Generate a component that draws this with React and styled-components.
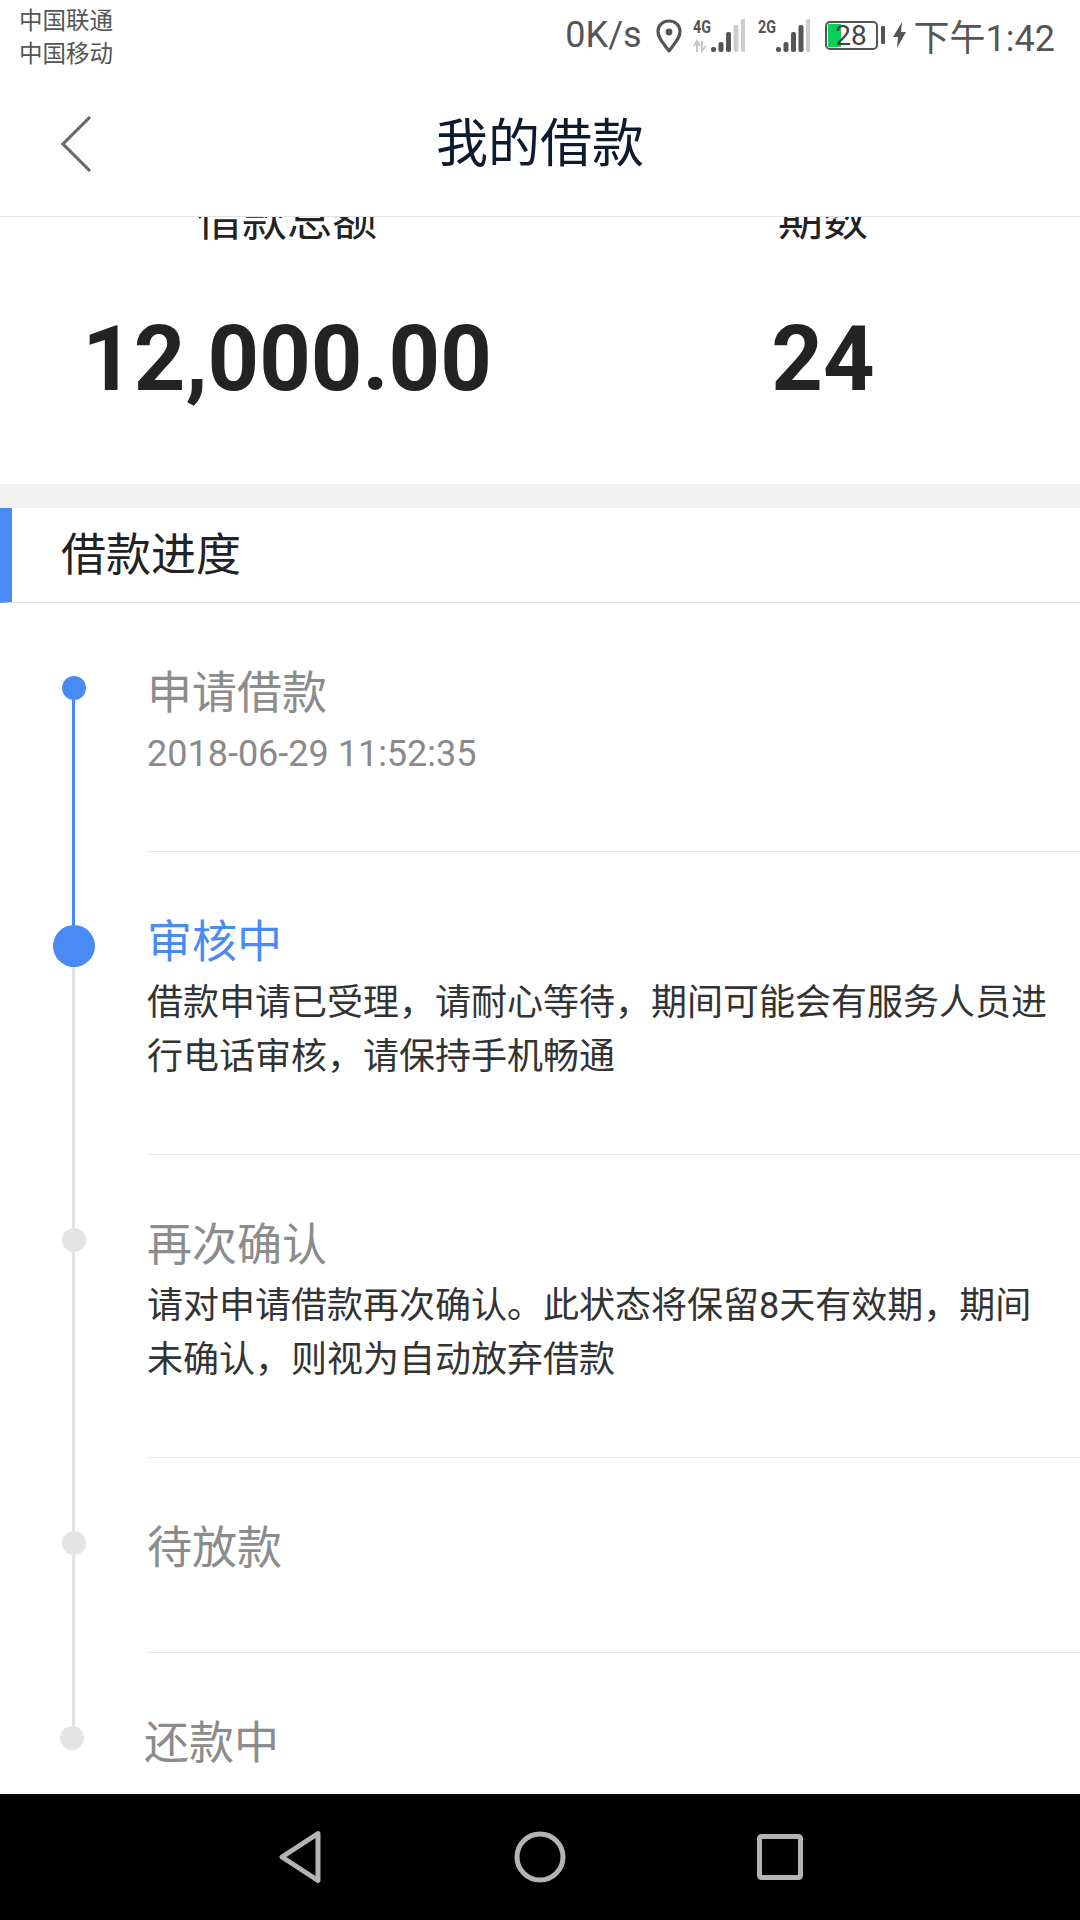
import React from "react";
import styled, { createGlobalStyle } from "styled-components";

const STEPS = [
  { title: "申请借款", date: "2018-06-29 11:52:35", state: "done" },
  {
    title: "审核中",
    body: ["借款申请已受理，请耐心等待，期间可能会有服务人员进", "行电话审核，请保持手机畅通"],
    state: "active",
  },
  {
    title: "再次确认",
    body: ["请对申请借款再次确认。此状态将保留8天有效期，期间", "未确认，则视为自动放弃借款"],
    state: "todo",
  },
  { title: "待放款", state: "todo" },
  { title: "还款中", state: "todo", last: true },
];

export default function App() {
  return (
    <>
      <GlobalStyle />
      <Screen>
        <StatusBar>
          <Carriers>
            <span>中国联通</span>
            <span>中国移动</span>
          </Carriers>
          <StatusRight>
            <Speed>0K/s</Speed>
            <IconSlot $gap={11} $top={2}>
              <PinIcon />
            </IconSlot>
            <IconSlot $gap={13} $top={-2}>
              <SignalIcon label="4G" arrows lit={3} />
            </IconSlot>
            <IconSlot $gap={15} $top={-2}>
              <SignalIcon label="2G" lit={4} />
            </IconSlot>
            <BatteryGroup>
              <Battery>28</Battery>
              <BatteryTip />
              <BoltIcon />
            </BatteryGroup>
            <Clock>下午1:42</Clock>
          </StatusRight>
        </StatusBar>

        <Header>
          <BackButton>
            <svg width="40" height="60" viewBox="0 0 40 60">
              <path d="M34 3 L7 30 L34 57" fill="none" stroke="#666" strokeWidth="3" />
            </svg>
          </BackButton>
          <HeaderTitle>我的借款</HeaderTitle>
        </Header>

        <Summary>
          <SummaryCol>
            <SummaryLabel>借款总额</SummaryLabel>
            <SummaryValue>12,000.00</SummaryValue>
          </SummaryCol>
          <SummaryCol>
            <SummaryLabel>期数</SummaryLabel>
            <SummaryValue>24</SummaryValue>
          </SummaryCol>
        </Summary>

        <Band />

        <SectionHead>
          <SectionTitle>借款进度</SectionTitle>
        </SectionHead>

        <Timeline>
          {STEPS.map((step, i) => (
            <Step key={step.title}>
              <Rail>
                <Segment $hidden={i === 0} $fixed $blue={step.state !== "todo"} />
                <Dot $state={step.state} $shift={step.last} />
                {!step.last && <Segment $blue={step.state === "done"} />}
              </Rail>
              <StepContent $shift={step.last} $last={step.last}>
                <StepTitle $state={step.state}>{step.title}</StepTitle>
                {step.date && <StepDate>{step.date}</StepDate>}
                {step.body && step.body.map((line) => <StepBody key={line}>{line}</StepBody>)}
              </StepContent>
            </Step>
          ))}
        </Timeline>

        <NavBar>
          <NavSlot>
            <svg width="44" height="54" viewBox="0 0 44 54">
              <path d="M40 3.5 L4 27 L40 50.5 Z" fill="none" stroke="#b4b4b4" strokeWidth="5" strokeLinejoin="round" />
            </svg>
          </NavSlot>
          <NavSlot>
            <svg width="52" height="52" viewBox="0 0 52 52">
              <circle cx="26" cy="26" r="23" fill="none" stroke="#b4b4b4" strokeWidth="5" />
            </svg>
          </NavSlot>
          <NavSlot>
            <svg width="46" height="46" viewBox="0 0 46 46">
              <rect x="2.5" y="2.5" width="41" height="41" rx="2" fill="none" stroke="#b4b4b4" strokeWidth="5" />
            </svg>
          </NavSlot>
        </NavBar>
      </Screen>
    </>
  );
}

const PinIcon = () => (
  <svg width="26" height="34" viewBox="0 0 26 34">
    <path
      d="M13 32 C7 24 2 19 2 12.5 C2 6 7 2 13 2 C19 2 24 6 24 12.5 C24 19 19 24 13 32 Z"
      fill="none"
      stroke="#555"
      strokeWidth="3.2"
      strokeLinejoin="round"
    />
    <circle cx="13" cy="13" r="3.4" fill="#555" />
  </svg>
);

const SignalIcon = ({ label, arrows, lit }) => {
  const bars = [5, 10, 20, 27, 33];
  return (
    <svg width="52" height="38" viewBox="0 -4 52 38">
      <text x="0" y="14" fontFamily="Roboto, sans-serif" fontSize="19" fontWeight="700" fill="#555" textLength="18" lengthAdjust="spacingAndGlyphs">
        {label}
      </text>
      {arrows && <path d="M1 27 L4 22 L7 27 M4 23 V33 M9 22 V32 L13 27" fill="none" stroke="#c8c8c8" strokeWidth="2" />}
      {bars.map((h, i) => (
        <rect key={i} x={18 + i * 7.5} y={33 - h} width="5" height={h} rx="2" fill={i < lit ? "#555" : "#cccccc"} />
      ))}
    </svg>
  );
};

const BoltIcon = () => (
  <svg width="13" height="26" viewBox="0 0 13 26">
    <path d="M9 0 L0 15 H5 L4 26 L13 10 H8 Z" fill="#555" />
  </svg>
);

const GlobalStyle = createGlobalStyle`
  html, body {
    margin: 0;
    padding: 0;
    background: #fff;
  }
  * {
    box-sizing: border-box;
  }
  #root {
    font-family: Roboto, "Noto Sans CJK SC", sans-serif;
  }
`;

const Screen = styled.div`
  width: 1080px;
  height: 1920px;
  display: flex;
  flex-direction: column;
  overflow: hidden;
  background: #fff;
`;

const StatusBar = styled.div`
  height: 72px;
  flex: none;
  display: flex;
  justify-content: space-between;
  align-items: flex-start;
  padding: 5px 25px 0 19px;
  color: #555;
`;

const Carriers = styled.div`
  display: flex;
  flex-direction: column;
  font-size: 23.5px;
  line-height: 33px;
`;

const StatusRight = styled.div`
  display: flex;
  align-items: center;
  height: 60px;
`;

const Speed = styled.span`
  font-size: 36px;
  margin-right: 14px;
`;

const IconSlot = styled.div`
  display: flex;
  flex: none;
  margin: ${(p) => p.$top}px ${(p) => p.$gap}px 0 0;
`;

const BatteryGroup = styled.div`
  display: flex;
  align-items: center;
  flex: none;
  margin-right: 8px;
`;

const Battery = styled.div`
  width: 53px;
  height: 29px;
  border: 2px solid #555;
  border-radius: 5px;
  font-size: 28px;
  line-height: 25px;
  text-align: center;
  color: #444;
  background: linear-gradient(#0ad05a, #0ad05a) 1px 1px / 13px 23px no-repeat;
`;

const BatteryTip = styled.div`
  width: 4px;
  height: 18px;
  margin: 0 8px 0 3px;
  background: #555;
  border-radius: 1px;
`;

const Clock = styled.span`
  font-size: 36px;
`;

const Header = styled.div`
  height: 145px;
  flex: none;
  display: flex;
  align-items: center;
  justify-content: center;
  padding-top: 2px;
  position: relative;
  background: #fff;
  border-bottom: 1px solid #e2e2e2;
`;

const BackButton = styled.div`
  position: absolute;
  left: 56px;
  top: 42px;
  line-height: 0;
`;

const HeaderTitle = styled.h1`
  margin: 0;
  font-size: 52px;
  font-weight: 400;
  color: #0e1a2e;
  line-height: 60px;
`;

const Summary = styled.div`
  height: 267px;
  flex: none;
  display: grid;
  grid-template-columns: 574px 498px;
  overflow: hidden;
  background: #fff;
`;

const SummaryCol = styled.div`
  display: flex;
  flex-direction: column;
  align-items: center;
  margin-top: -26px;
`;

const SummaryLabel = styled.div`
  font-size: 45px;
  line-height: 60px;
  color: #222;
`;

const SummaryValue = styled.div`
  margin-top: 51px;
  font-size: 90px;
  font-weight: 700;
  line-height: 116px;
  color: #232323;
`;

const Band = styled.div`
  height: 24px;
  flex: none;
  background: #f2f2f2;
`;

const SectionHead = styled.div`
  height: 95px;
  flex: none;
  display: flex;
  align-items: center;
  padding: 0 0 7px 49px;
  border-left: 12px solid #4a8af4;
  border-bottom: 1px solid #e4e4e4;
`;

const SectionTitle = styled.h2`
  margin: 0;
  font-size: 45px;
  font-weight: 400;
  color: #222;
`;

const Timeline = styled.div`
  flex: 1;
  min-height: 0;
  overflow: hidden;
`;

const Step = styled.div`
  display: flex;
`;

const Rail = styled.div`
  width: 147px;
  flex: none;
  display: flex;
  flex-direction: column;
  align-items: center;
`;

const Segment = styled.div`
  width: 3px;
  flex: ${(p) => (p.$fixed ? "0 0 73px" : "1")};
  background: ${(p) => (p.$hidden ? "transparent" : p.$blue ? "#4a8af4" : "#e2e2e2")};
`;

const Dot = styled.div`
  flex: none;
  border-radius: 50%;
  width: ${(p) => (p.$state === "active" ? "42px" : "24px")};
  height: ${(p) => (p.$state === "active" ? "42px" : "24px")};
  margin-right: ${(p) => (p.$shift ? "4px" : "0")};
  background: ${(p) => (p.$state === "todo" ? "#e4e4e4" : "#4a8af4")};
`;

const StepContent = styled.div`
  flex: 1;
  padding: 61px 0 70px;
  margin-left: ${(p) => (p.$shift ? "-3px" : "0")};
  border-bottom: ${(p) => (p.$last ? "none" : "1px solid #e8e8e8")};
`;

const StepTitle = styled.div`
  font-size: 45px;
  line-height: 60px;
  margin-bottom: 3px;
  color: ${(p) => (p.$state === "active" ? "#4a8af4" : "#8c8c8c")};
`;

const StepDate = styled.div`
  font-size: 36px;
  line-height: 53px;
  margin: 4px 0 0;
  color: #8a8a8a;
`;

const StepBody = styled.div`
  font-size: 36px;
  line-height: 54px;
  color: #333;
  white-space: nowrap;
`;

const NavBar = styled.div`
  height: 126px;
  flex: none;
  display: grid;
  grid-template-columns: repeat(3, 240px);
  justify-content: center;
  align-items: center;
  background: #000;
`;

const NavSlot = styled.div`
  display: flex;
  justify-content: center;
  line-height: 0;
`;
